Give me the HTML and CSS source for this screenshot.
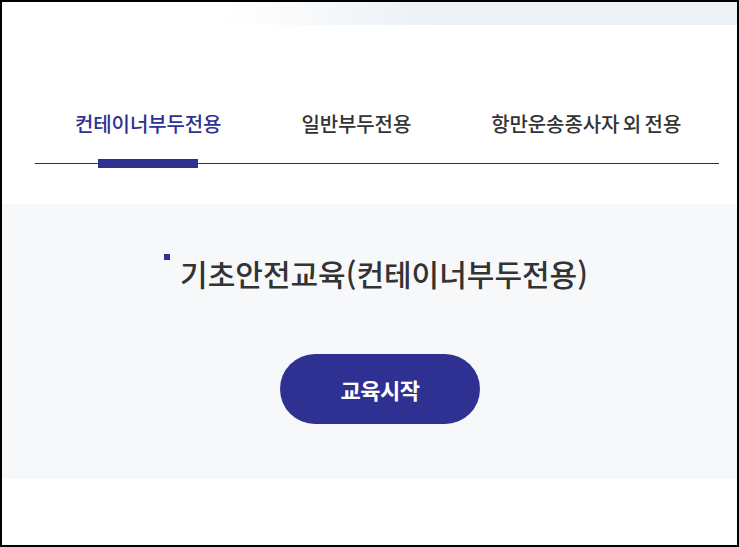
FILE: index.html
```html
<!DOCTYPE html>
<html lang="ko">
<head>
<meta charset="utf-8">
<title>기초안전교육</title>
<link rel="stylesheet" href="styles.css">
</head>
<body>
<div class="frame">
  <div class="topbar"></div>
  <nav class="tabs">
    <a class="tab active">컨테이너부두전용</a>
    <a class="tab">일반부두전용</a>
    <a class="tab">항만운송종사자 외 전용</a>
  </nav>
  <section class="course">
    <h2 class="course-title"><span class="dot"></span>기초안전교육(컨테이너부두전용)</h2>
    <a class="start-btn">교육시작</a>
  </section>
</div>
</body>
</html>
```

FILE: styles.css
```css
* { box-sizing: border-box; }
html, body { margin: 0; padding: 0; background: #fff; }
body {
  font-family: "Noto Sans CJK KR", "Noto Sans", sans-serif;
  color: #333;
}
.frame {
  width: 739px;
  height: 547px;
  border: 2px solid #000;
  overflow: hidden;
  background: #fff;
}
.topbar {
  height: 23px;
  background: linear-gradient(100deg, #ffffff 0%, #ffffff 30%, #ecf1f6 58%, #ecf1f6 100%);
}
.tabs {
  display: flex;
  margin: 72px 18px 0 33px;
  border-bottom: 1px solid #333;
}
.tab {
  position: relative;
  padding: 15px 40px 27px 40px;
  font-size: 20px;
  line-height: 24px;
  font-weight: 500;
  letter-spacing: -0.1px;
  word-spacing: -2px;
  color: #333;
  white-space: nowrap;
}
.tab.active { color: #2e3192; }
.tab.active::after {
  content: "";
  position: absolute;
  left: 50%;
  bottom: -5px;
  width: 100px;
  height: 9px;
  margin-left: -50px;
  background: #2e3192;
}
.course {
  margin-top: 40px;
  height: 275px;
  background: #f7f8fa;
  padding: 49px 0 0 21px;
  display: flex;
  flex-direction: column;
  align-items: center;
}
.course-title {
  margin: 0;
  display: flex;
  align-items: flex-start;
  padding-right: 8px;
  font-size: 30px;
  line-height: 40px;
  font-weight: 500;
  letter-spacing: 0;
  color: #333;
}
.dot {
  width: 6px;
  height: 6px;
  background: #2e3192;
  margin: 1px 10px 0 0;
}
.start-btn {
  margin-top: 61px;
  width: 200px;
  height: 70px;
  border-radius: 35px;
  background: #2e3192;
  color: #fff;
  font-size: 22px;
  font-weight: 700;
  letter-spacing: -0.5px;
  display: flex;
  align-items: center;
  justify-content: center;
}
```
